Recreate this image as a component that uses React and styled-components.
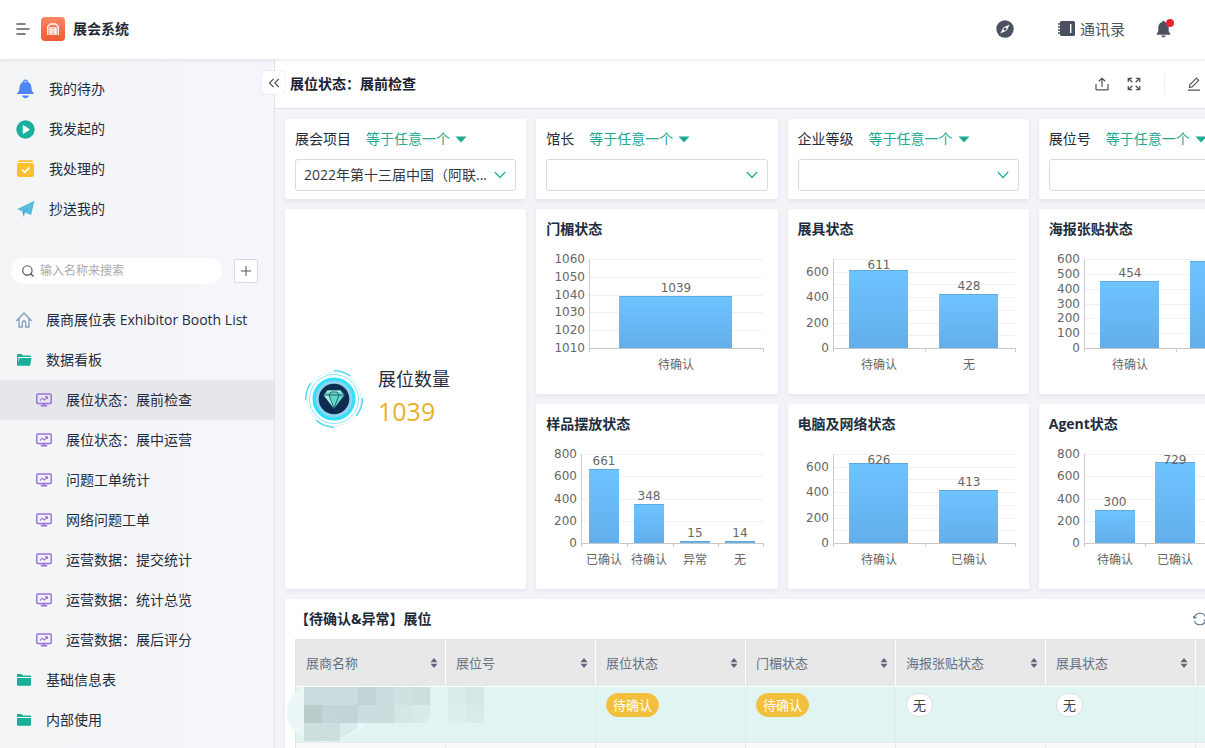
import React from 'react'
import styled, { createGlobalStyle } from 'styled-components'
import { Search, Plus, ChevronsLeft } from 'lucide-react'

const GlobalStyle = createGlobalStyle`
    *{
        box-sizing: border-box;
    }
    body{
        margin:0;
        overflow: hidden;
        font-family: "Open Sans", "Noto Sans CJK SC", sans-serif;
        font-size: 14px;
        line-height: 20px;
        color: #1f2d3d;
    }
    a{
        color: inherit;
        text-decoration: none;
    }
    button{
        display:flex;
        align-items:center;
        justify-content:center;
        padding:0;
        border: none;
        background: none;
        font: inherit;
        color: inherit;
        cursor: pointer;
    }
    svg{
        display:block;
        flex-shrink:0;
    }
`

const Page = styled.div`
    display:flex;
    flex-direction:column;
    height:100vh;
    background-color: #f3f3f8;
`

//header
const Header = styled.header`
    display:flex;
    align-items:center;
    flex-shrink:0;
    height:59px;
    padding:0 34px 2px 16px;
    background-color: #fff;
    box-shadow: 0 1px 4px rgba(0, 0, 0, 0.1);
    position: relative;
    z-index:2;
    color: #4b5160;
`
const Logo = styled.span`
    display:flex;
    align-items:center;
    justify-content:center;
    width:24px;
    height:24px;
    margin:0 8px 0 11px;
    border-radius:4px;
    background-image: linear-gradient(to bottom, #fb8667, #ee5a33);
`
const Brand = styled.h1`
    flex:1;
    margin:0;
    font-size: 14px;
    line-height: 20px;
    color: #1f2937;
`
const Contacts = styled.a`
    display:flex;
    align-items:center;
    gap:5px;
    margin:0 31px 0 44px;
    font-size: 15px;
`
const BellButton = styled.button`
    position: relative;
    &::after{
        position: absolute;
        top:-1px;
        right:-3px;
        width:8px;
        height:8px;
        border-radius:50%;
        background-color: #e8262f;
        content: '';
    }
`

//sidebar
const Body = styled.div`
    display:flex;
    flex:1;
    min-height:0;
`
const Side = styled.aside`
    display:flex;
    flex-direction:column;
    flex:0 0 275px;
    padding-top:10px;
    border-right:1px solid #dfe2e8;
    background-image: linear-gradient(to right, #f4f5f6, #f5f5fb);
    position: relative;
    z-index:1;
`
const CollapseButton = styled.button`
    position: absolute;
    top:12px;
    right:-11px;
    width:23px;
    height:23px;
    border-radius:4px;
    background-color: #fff;
    box-shadow: 0 0 1px rgba(0, 0, 0, 0.3);
    color: #555;
`
const NavItem = styled.a`
    display:flex;
    align-items:center;
    flex-shrink:0;
    height:40px;
    gap:14px;
    padding-left:${p => p.$sub ? 36 : 16}px;
    background-color: ${p => p.$active ? '#e6e7ea' : 'transparent'};
    white-space: nowrap;
    svg{
        width:${p => p.$task ? 19 : 16}px;
    }
`
const SearchRow = styled.div`
    display:flex;
    align-items:center;
    gap:12px;
    padding:29px 16px 16px 11px;
`
const SearchBox = styled.label`
    display:flex;
    align-items:center;
    flex:1;
    gap:5px;
    height:26px;
    padding-left:10px;
    border-radius:13px;
    background-color: #fff;
    color: #555;
    input{
        flex:1;
        min-width:0;
        padding:0;
        border: none;
        outline: none;
        background: none;
        font: inherit;
        font-size: 12px;
    }
    input::placeholder{
        color: #a9a9ad;
    }
`
const AddButton = styled.button`
    width:24px;
    height:24px;
    border:1px solid #d9dade;
    border-radius:2px;
    background-color: #fff;
    color: #555;
`

//content
const Main = styled.main`
    display:flex;
    flex-direction:column;
    flex:1;
    min-width:0;
    overflow: hidden;
`
const Toolbar = styled.div`
    display:flex;
    align-items:center;
    flex-shrink:0;
    height:50px;
    padding:0 4px 0 15px;
    border-bottom:1px solid #dfe1e6;
    background-color: #fff;
    color: #4f5460;
    h2{
        flex:1;
        margin:0;
        font-size: 14px;
        line-height: 20px;
        color: #1a2230;
    }
`
const Tools = styled.div`
    display:flex;
    align-items:center;
    gap:18px;
`
const Divider = styled.span`
    width:1px;
    height:20px;
    margin:0 4px 0 5px;
    background-color: #eceef2;
`
const Board = styled.div`
    display:grid;
    grid-template-columns: repeat(4, minmax(0, 1fr));
    grid-template-rows: 80px 185px 185px auto;
    gap:10px;
    min-width:1015px;
    padding:10px;
`
const Card = styled.section`
    border-radius:2px;
    background-color: #fff;
    box-shadow: 0 2px 5px rgba(60, 60, 110, 0.08);
`
const FilterCard = styled(Card)`
    display:flex;
    flex-direction:column;
    gap:10px;
    padding:10px;
`
const FilterTop = styled.div`
    display:flex;
    gap:15px;
`
const Operator = styled.button`
    gap:5px;
    color: #22a993;
`
const SelectBox = styled.div`
    display:grid;
    align-items:center;
    height:32px;
    border:1px solid #d9dbdf;
    border-radius:3px;
    select, svg{
        grid-area: 1 / 1;
    }
    select{
        width:100%;
        height:30px;
        padding:0 26px 0 8px;
        border: none;
        appearance: none;
        background: none;
        font: inherit;
        color: #33383f;
    }
    svg{
        justify-self:end;
        margin-right:9px;
        pointer-events: none;
    }
`
const TotalCard = styled(Card)`
    display:flex;
    align-items:center;
    grid-row: span 2;
    gap:15px;
    padding-left:20px;
    div{
        padding-bottom:8px;
    }
    p{
        margin:0;
        font-size: 18px;
        line-height: 32px;
    }
    strong{
        display:block;
        font-size: 25px;
        font-weight: normal;
        line-height: 32px;
        color: #ebb02a;
    }
`
const ChartCard = styled(Card)`
    overflow: hidden;
    h3{
        margin:10px 10px 0;
        font-size: 14px;
        line-height: 20px;
    }
`
const Plot = styled.svg`
    font-family: "DejaVu Sans", "Noto Sans CJK SC", sans-serif;
    font-size: 12px;
    fill: #666;
`
const TableCard = styled(Card)`
    grid-column: 1 / -1;
    padding:0 10px;
`
const TableHead = styled.div`
    display:flex;
    align-items:center;
    justify-content:space-between;
    height:40px;
    padding-right:63px;
    color: #5b7796;
    h3{
        margin:0;
        font-size: 14px;
        color: #1f2937;
    }
`
const Table = styled.table`
    width:100%;
    border-top:1px solid #e2e3e4;
    border-left:1px solid #e2e3e4;
    border-collapse: separate;
    border-spacing:0;
    table-layout: fixed;
    font-size: 13px;
    th{
        height:47px;
        width:150px;
        padding:0 7px 0 10px;
        border-right:1px solid #fff;
        border-bottom:1px solid #fff;
        background-color: #e8e8e8;
        font-weight: normal;
        color: #667084;
    }
    th:last-child{
        width:auto;
    }
    td{
        height:56px;
        padding:6px 10px;
        border-right:1px solid #e6eaea;
        border-bottom:1px solid #e6eaea;
        background-color: #e0f4f2;
        vertical-align: top;
        position: relative;
    }
    tr:nth-child(even) td{
        background-color: #f9f9f9;
    }
`
const Sortable = styled.div`
    display:flex;
    align-items:center;
    justify-content:space-between;
`
const Tag = styled.span`
    display:inline-block;
    height:24px;
    padding:0 6px;
    border:1px solid ${p => p.$wait ? '#f3c03e' : '#dcdcdc'};
    border-radius:12px;
    background-color: ${p => p.$wait ? '#f3c03e' : '#fff'};
    line-height: 22px;
    color: ${p => p.$wait ? '#fff' : '#444'};
`
const Mosaic = styled.svg`
    position: absolute;
    top:0;
    left:-9px;
    z-index:1;
`

//icons
const MenuIcon = () => (
    <svg width='14' height='14' viewBox='0 0 14 14' stroke='#555b66' strokeWidth='1.6' strokeLinecap='round'>
        <path d='M1 2h8M1 7h12M1 12h8'/>
    </svg>
)
const HouseLogo = () => (
    <svg width='14' height='14' viewBox='0 0 14 14' fill='none' stroke='#fff' strokeWidth='1.3'>
        <path d='M1.8 13V4.2L4.5 2h5l2.7 2.2V13M4 13V5.8h6V13M4 8h6M4 10h6M4 12.2h6'/>
    </svg>
)
const CompassIcon = () => (
    <svg width='18' height='18' viewBox='0 0 18 18'>
        <circle cx='9' cy='9' r='8.7' fill='#4b5160'/>
        <path d='M13.6 4.4 10.8 10.6 4.4 13.6 7.3 7.4z' fill='#fff'/>
        <circle cx='9' cy='9' r='1.5' fill='#4b5160'/>
    </svg>
)
const BookIcon = () => (
    <svg width='17' height='17' viewBox='0 0 17 17'>
        <rect x='2' y='1' width='15' height='15' rx='1.5' fill='#4b5160'/>
        <path d='M0 4h3.5M0 7h3.5M0 10h3.5M0 13h3.5' stroke='#4b5160' strokeWidth='1.3'/>
        <path d='M12.7 4v9' stroke='#fff' strokeWidth='1.4'/>
    </svg>
)
const BellIcon = () => (
    <svg width='15' height='18' viewBox='0 0 15 18' fill='#4b5160'>
        <path d='M7.5 0.8c.8 0 1.2.5 1.2 1.1 2.5.6 4 2.7 4 5.4v4l1.6 2.6v.8H.7v-.8l1.6-2.6v-4c0-2.7 1.5-4.8 4-5.4 0-.6.4-1.1 1.2-1.1zM5.2 15.4h4.6c-.3 1.2-1.2 1.8-2.3 1.8s-2-.6-2.3-1.8z'/>
    </svg>
)
const TodoIcon = () => (
    <svg height='20' viewBox='0 0 19 20' fill='#4f86f7'>
        <path d='M9.5.5c1.6 0 2.5 1 2.7 2.4 2 1 3 2.8 3.2 5.2.2 3.2.8 4.9 2.3 5.9v.9H1.3v-.9c1.5-1 2.1-2.7 2.3-5.9.2-2.4 1.2-4.2 3.2-5.2C7 1.5 7.9.5 9.5.5zM6 16.5h7c-.7 1.8-2 2.7-3.5 2.7S6.7 18.3 6 16.5z'/>
        <path d='M8 3.3c.7-1 2.3-1 3 0' stroke='#f4f5f6' fill='none'/>
    </svg>
)
const PlayIcon = () => (
    <svg height='19' viewBox='0 0 19 19'>
        <circle cx='9.5' cy='9.5' r='9.2' fill='#18b19d'/>
        <path d='M7.3 5.5v8l6-4z' fill='#fff' stroke='#fff' strokeLinejoin='round'/>
    </svg>
)
const DoneIcon = () => (
    <svg height='18' viewBox='0 0 19 18'>
        <path d='M3 1.2h13' stroke='#fbbf2b' strokeWidth='1.8' strokeLinecap='round'/>
        <rect x='1' y='3' width='17' height='14' rx='2' fill='#fbc02d'/>
        <path d='m6 9.5 2.8 2.8 4.7-4.8' fill='none' stroke='#fff' strokeWidth='1.7'/>
    </svg>
)
const PlaneIcon = () => (
    <svg height='18' viewBox='0 0 19 18'>
        <path d='M18.5.8 1 9.3l5.2 2L14.5 5l-5.7 7.5 6.3 2.5z' fill='#53bde0'/>
        <path d='M8.8 12.5 14.5 5 6.2 11.3l1.6 5.7z' fill='#3fa5cc'/>
    </svg>
)
const HomeIcon = () => (
    <svg height='16' viewBox='0 0 16 16' fill='none' stroke='#7f9dbf' strokeWidth='1.3' strokeLinejoin='round' strokeLinecap='round'>
        <path d='M.8 8.5 8 1l7.2 7.5M3 7.2V15h3.3v-4.3c0-1 .7-1.7 1.7-1.7s1.7.7 1.7 1.7V15H13V7.2'/>
    </svg>
)
const FolderIcon = ({open}) => (
    <svg height='14' viewBox='0 0 16 14' fill='#17b09a'>
        <path d='M1 2c0-.6.4-1 1-1h3.5l1.3 1.5H14c.6 0 1 .4 1 1V4H1z'/>
        {
            open?
            <path d='M3.5 5H15.5l-1.3 7c-.1.5-.5.7-1 .7H2c-.6 0-1-.4-1-1V4.5h1.5V10z'/>
            :
            <path d='M1 5h14v6.7c0 .6-.4 1-1 1H2c-.6 0-1-.4-1-1z'/>
        }
    </svg>
)
const BoardIcon = () => (
    <svg height='14' viewBox='0 0 16 14' fill='none' stroke='#9a72dc' strokeWidth='1.5'>
        <rect x='.8' y='1' width='14.4' height='9.5' rx='1'/>
        <path d='M4 7.5 6.3 5.2 8.3 7 11.3 4M9 3.8h2.5v2.3' strokeWidth='1.1'/>
        <path d='M8 10.5V13M4.8 12.6h6.4' strokeWidth='1.8'/>
    </svg>
)
const ShareIcon = () => (
    <svg width='14' height='14' viewBox='0 0 14 14' fill='none' stroke='currentColor' strokeWidth='1.2' strokeLinejoin='round'>
        <path d='M7 10V1.3M3.8 4.3 7 1.2l3.2 3.1M1 7v5.2c0 .4.2.6.6.6h10.8c.4 0 .6-.2.6-.6V7'/>
    </svg>
)
const ExpandIcon = () => (
    <svg width='14' height='14' viewBox='0 0 14 14' fill='none' stroke='currentColor' strokeWidth='1.3'>
        <path d='M5 1.3H1.3V5M1.3 1.3l4 4M9 1.3h3.7V5M12.7 1.3l-4 4M5 12.7H1.3V9M1.3 12.7l4-4M9 12.7h3.7V9M12.7 12.7l-4-4'/>
    </svg>
)
const PenIcon = () => (
    <svg width='14' height='14' viewBox='0 0 14 14' fill='none' stroke='currentColor' strokeWidth='1.2' strokeLinejoin='round'>
        <path d='M2.3 10.5 3 7.7 9.5 1.2l2.2 2.2L5.2 9.9zM1 13.2h12'/>
    </svg>
)
const RefreshIcon = () => (
    <svg width='14' height='14' viewBox='0 0 14 14' fill='none' stroke='currentColor' strokeWidth='1.2'>
        <path d='M1.2 5.8A6 6 0 0 1 12.5 4.8M12.8 8.2A6 6 0 0 1 1.5 9.2M.2 4l1 2.3 2.2-1M13.8 10l-1-2.3-2.2 1'/>
    </svg>
)
const CaretIcon = () => (
    <svg width='12' height='7' viewBox='0 0 12 7'>
        <path d='M.5.5h11L6 6.5z' fill='#22a993'/>
    </svg>
)
const ArrowIcon = () => (
    <svg width='12' height='8' viewBox='0 0 12 8' fill='none' stroke='#22b39b' strokeWidth='1.3'>
        <path d='M.8 1 6 6.5 11.2 1'/>
    </svg>
)
const SortIcon = () => (
    <svg width='8' height='10' viewBox='0 0 8 10' fill='#5d687c'>
        <path d='M4 0l3.5 4.3h-7zM4 10l3.5-4.3h-7z'/>
    </svg>
)
const GemIcon = () => (
    <svg width='58' height='58' viewBox='0 0 58 58' fill='none'>
        <circle cx='29' cy='29' r='27' stroke='#d5f6fb'/>
        <path d='M29 .7a28.3 28.3 0 0 1 16 5M57.3 28a28.3 28.3 0 0 1-6 18M29 57.3a28.3 28.3 0 0 1-18-7M.7 30a28.3 28.3 0 0 1 5-17' stroke='#43d3ec' strokeWidth='1.3'/>
        <circle cx='29' cy='29' r='24.5' stroke='#8ce6f4'/>
        <circle cx='29' cy='29' r='20' fill='#8ed3f0' stroke='#2de0fb' strokeWidth='3'/>
        <circle cx='29' cy='29' r='15.3' fill='#0d2c4f'/>
        <path d='M22.5 20.5h13l4 4.5L29 38.5 18.5 25z' fill='#62d8c4'/>
        <path d='M22.5 20.5h13l1.5 2H21zM18.5 25H24l5 13.5z' fill='#a5f0e4'/>
        <path d='M18.5 25h21M24 25l5 13.5L34 25l-2-3h-6z' stroke='#14526b' strokeWidth='.9'/>
    </svg>
)

//data
const tasks = [
    {name:'我的待办', icon:<TodoIcon/>},
    {name:'我发起的', icon:<PlayIcon/>},
    {name:'我处理的', icon:<DoneIcon/>},
    {name:'抄送我的', icon:<PlaneIcon/>}
]
const menus = [
    {name:'展商展位表 Exhibitor Booth List', icon:<HomeIcon/>},
    {name:'数据看板', icon:<FolderIcon open/>},
    {name:'展位状态：展前检查', sub:true, active:true},
    {name:'展位状态：展中运营', sub:true},
    {name:'问题工单统计', sub:true},
    {name:'网络问题工单', sub:true},
    {name:'运营数据：提交统计', sub:true},
    {name:'运营数据：统计总览', sub:true},
    {name:'运营数据：展后评分', sub:true},
    {name:'基础信息表', icon:<FolderIcon/>},
    {name:'内部使用', icon:<FolderIcon/>}
]
const filters = [
    {name:'展会项目', value:'2022年第十三届中国（阿联...'},
    {name:'馆长', value:''},
    {name:'企业等级', value:''},
    {name:'展位号', value:''}
]
const charts = [
    {title:'门楣状态', left:54, min:1010, max:1060, grid:10, step:10, bars:[['待确认', 1039]]},
    {title:'展具状态', left:46, min:0, max:700, grid:100, step:200, bars:[['待确认', 611], ['无', 428]]},
    {title:'海报张贴状态', left:46, min:0, max:600, grid:100, step:100, bars:[['待确认', 454], ['无', 585]]},
    {title:'样品摆放状态', left:46, min:0, max:800, grid:200, step:200, bars:[['已确认', 661], ['待确认', 348], ['异常', 15], ['无', 14]]},
    {title:'电脑及网络状态', left:46, min:0, max:700, grid:100, step:200, bars:[['待确认', 626], ['已确认', 413]]},
    {title:'Agent状态', left:46, min:0, max:800, grid:200, step:200, bars:[['待确认', 300], ['已确认', 729], ['无', 10]]}
]
const columns = ['展商名称', '展位号', '展位状态', '门楣状态', '海报张贴状态', '展具状态', '']
const row = ['', '', '待确认', '待确认', '无', '无', '']

// x, y, fill of every masked block
const blocks = [
    [17, 0, '#cbdcdf'], [35, 0, '#ccdcde'], [53, 0, '#cadcdf'], [71, 0, '#c1d3d7'], [89, 0, '#cbdddf'], [107, 0, '#cfe1e1'], [125, 0, '#cbdfde'],
    [17, 18, '#bacdcd'], [35, 18, '#c3d5d6'], [53, 18, '#c1d4d8'], [71, 18, '#cbdedf'], [89, 18, '#cbdedd'], [107, 18, '#d4e7e6'], [125, 18, '#d6eae9'],
    [17, 36, '#cbdfde'], [35, 36, '#cbdfde'],
    [161, 0, '#d8eae9'], [179, 0, '#d3e7e7'], [161, 18, '#dceeed'], [179, 18, '#d8ebea']
]

const BarChart = ({left, min, max, grid, step, bars}) => {
    const top = 20
    const bottom = 109
    const right = 227
    const band = (right - left) / bars.length
    const toY = v => Math.round(bottom - (v - min) / (max - min) * (bottom - top))
    const lines = []
    for(let v = min; v <= max; v += grid){
        lines.push(v)
    }
    return (
        <Plot width='241' height='150' role='img'>
            <defs>
                <linearGradient id='bar' x1='0' y1='0' x2='0' y2='1'>
                    <stop offset='0' stopColor='#6ec4ff'/>
                    <stop offset='1' stopColor='#62aeea'/>
                </linearGradient>
            </defs>
            {
                lines.map(v => (
                    <g key={v}>
                        <rect x={left} y={toY(v)} width={right - left} height='1' fill='#f1f1f3'/>
                        {
                            (v - min) % step === 0&&
                            <text x={left - 5} y={toY(v) + 4} textAnchor='end'>{v}</text>
                        }
                    </g>
                ))
            }
            {
                bars.map(([name, value], i) => {
                    const width = Math.ceil(band * 0.65)
                    const center = Math.floor(left + band * (i + 0.5))
                    const x = Math.floor(center - width / 2)
                    return (
                        <g key={name}>
                            <rect x={x} y={toY(value)} width={width} height={bottom - toY(value)} fill='url(#bar)'/>
                            <rect x={x} y={toY(value)} width={width} height='1' fill='#5fa9dd'/>
                            <text x={center} y={Math.max(toY(value) - 4, top + 10)} textAnchor='middle'>{value}</text>
                            <text x={center} y={bottom + 21} textAnchor='middle'>{name}</text>
                            <rect x={Math.round(left + band * (i + 1))} y={bottom} width='1' height='4' fill='#ccc'/>
                        </g>
                    )
                })
            }
            <rect x={left - 1} y={top} width='1' height={bottom - top + 4} fill='#ccc'/>
            <rect x={left - 1} y={bottom} width={right - left + 1} height='1' fill='#c8c8c8'/>
        </Plot>
    )
}

const StateChart = ({data}) => (
    <ChartCard>
        <h3>{data.title}</h3>
        <BarChart {...data}/>
    </ChartCard>
)

const Sidebar = () => (
    <Side>
        <CollapseButton aria-label='收起'><ChevronsLeft size={18} strokeWidth={1.5}/></CollapseButton>
        {
            tasks.map(t => <NavItem key={t.name} href='#' $task>{t.icon}{t.name}</NavItem>)
        }
        <SearchRow>
            <SearchBox>
                <Search size={14} strokeWidth={2}/>
                <input type='text' aria-label='搜索' placeholder='输入名称来搜索'/>
            </SearchBox>
            <AddButton aria-label='新建'><Plus size={16} strokeWidth={1.5}/></AddButton>
        </SearchRow>
        {
            menus.map(m => (
                <NavItem key={m.name} href='#' $sub={m.sub} $active={m.active}>
                    {m.sub ? <BoardIcon/> : m.icon}
                    {m.name}
                </NavItem>
            ))
        }
    </Side>
)

const Filter = ({data, id}) => (
    <FilterCard>
        <FilterTop>
            <label htmlFor={id}>{data.name}</label>
            <Operator>等于任意一个<CaretIcon/></Operator>
        </FilterTop>
        <SelectBox>
            <select id={id}>
                <option>{data.value}</option>
            </select>
            <ArrowIcon/>
        </SelectBox>
    </FilterCard>
)

const BoothTable = () => (
    <TableCard>
        <TableHead>
            <h3>【待确认&异常】展位</h3>
            <button aria-label='刷新'><RefreshIcon/></button>
        </TableHead>
        <Table>
            <thead>
                <tr>
                    {
                        columns.map((name, i) => (
                            <th key={i}>{name&&<Sortable>{name}<SortIcon/></Sortable>}</th>
                        ))
                    }
                </tr>
            </thead>
            <tbody>
                <tr>
                    {
                        row.map((value, i) => (
                            <td key={i}>
                                {
                                    i === 0&&
                                    <Mosaic width='200' height='55'>
                                        <path d='M17 0h60v40q-20 15-45 15C12 52 0 40 0 27 0 14 6 5 17 0z' fill='#ebf7f6'/>
                                        <path d='M53 36h18v4q-8 7-18 11z' fill='#d9ebea'/>
                                        {
                                            blocks.map(([x, y, fill]) => <rect key={x + '-' + y} x={x} y={y} width='18' height='18' fill={fill}/>)
                                        }
                                        <path d='M143 26v10h-8q8-2 8-10z' fill='#e0f4f2'/>
                                    </Mosaic>
                                }
                                {value&&<Tag $wait={value === '待确认'}>{value}</Tag>}
                            </td>
                        ))
                    }
                </tr>
                <tr>
                    {columns.map((name, i) => <td key={i}/>)}
                </tr>
            </tbody>
        </Table>
    </TableCard>
)

const App = () => (
    <Page>
        <GlobalStyle/>
        <Header>
            <button aria-label='菜单'><MenuIcon/></button>
            <Logo><HouseLogo/></Logo>
            <Brand>展会系统</Brand>
            <button aria-label='发现'><CompassIcon/></button>
            <Contacts href='#'><BookIcon/>通讯录</Contacts>
            <BellButton aria-label='通知'><BellIcon/></BellButton>
        </Header>
        <Body>
            <Sidebar/>
            <Main>
                <Toolbar>
                    <h2>展位状态：展前检查</h2>
                    <Tools>
                        <button aria-label='分享'><ShareIcon/></button>
                        <button aria-label='全屏'><ExpandIcon/></button>
                        <Divider/>
                        <button aria-label='编辑'><PenIcon/></button>
                    </Tools>
                </Toolbar>
                <Board>
                    {filters.map((f, i) => <Filter key={f.name} data={f} id={'filter-' + i}/>)}
                    <TotalCard>
                        <GemIcon/>
                        <div>
                            <p>展位数量</p>
                            <strong>1039</strong>
                        </div>
                    </TotalCard>
                    {charts.map(c => <StateChart key={c.title} data={c}/>)}
                    <BoothTable/>
                </Board>
            </Main>
        </Body>
    </Page>
)

export default App
